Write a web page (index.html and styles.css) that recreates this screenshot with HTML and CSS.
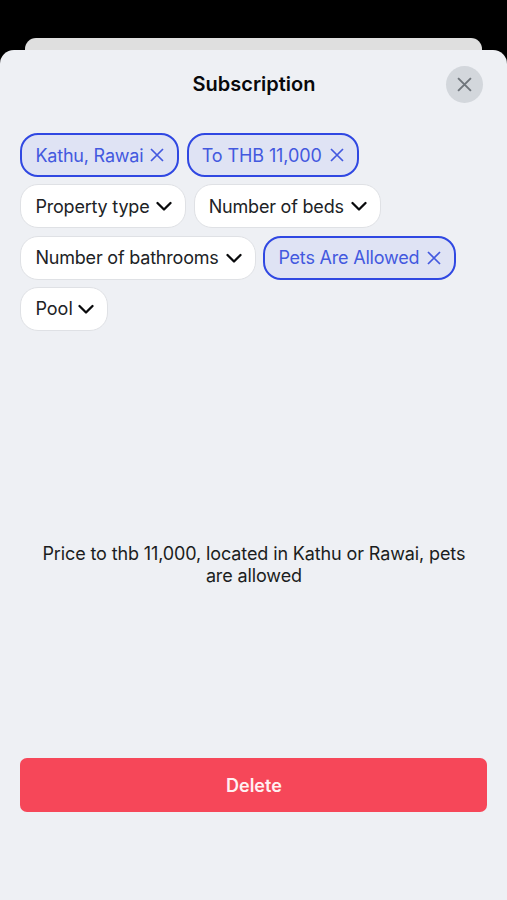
FILE: index.html
```html
<!DOCTYPE html>
<html lang="en">
<head>
<meta charset="utf-8">
<title>Subscription</title>
<link rel="stylesheet" href="styles.css">
</head>
<body>
<svg class="sprite" aria-hidden="true">
  <symbol id="cross" viewBox="0 0 14 14"><path d="M1 1 13 13M13 1 1 13"/></symbol>
  <symbol id="chevron" viewBox="0 0 16 10"><path d="M1.5 2 8 8.5 14.5 2"/></symbol>
</svg>
<div class="back-card"></div>
<main class="sheet">
  <header class="header">
    <h1>Subscription</h1>
    <button class="close" aria-label="Close"><svg class="close-icon"><use href="#cross"/></svg></button>
  </header>
  <div class="chips">
    <button class="chip active kathu"><span>Kathu, Rawai</span><svg class="cross"><use href="#cross"/></svg></button>
    <button class="chip active price"><span>To THB 11,000</span><svg class="cross"><use href="#cross"/></svg></button>
    <button class="chip type"><span>Property type</span><svg class="chevron"><use href="#chevron"/></svg></button>
    <button class="chip beds"><span>Number of beds</span><svg class="chevron"><use href="#chevron"/></svg></button>
    <button class="chip baths"><span>Number of bathrooms</span><svg class="chevron"><use href="#chevron"/></svg></button>
    <button class="chip active pets"><span>Pets Are Allowed</span><svg class="cross"><use href="#cross"/></svg></button>
    <button class="chip pool"><span>Pool</span><svg class="chevron"><use href="#chevron"/></svg></button>
  </div>
  <p class="summary">Price to thb 11,000, located in Kathu or Rawai, pets are allowed</p>
  <button class="delete">Delete</button>
</main>
</body>
</html>
```
FILE: styles.css
```css
* { box-sizing: border-box; }
body {
  margin: 0;
  height: 900px;
  padding-top: 38px;
  display: flex;
  flex-direction: column;
  overflow: hidden;
  background: #000;
  color: #1b1d20;
  font-family: Inter, "Liberation Sans", sans-serif;
}
button { font: inherit; margin: 0; border: 0; padding: 0; }
svg { fill: none; stroke: currentColor; flex: none; }
.sprite { position: absolute; width: 0; height: 0; }
.back-card {
  flex: none;
  height: 12px;
  margin: 0 25px;
  border-radius: 11px 11px 0 0;
  background: #dfdfdf;
}
.sheet {
  flex: 1;
  display: flex;
  flex-direction: column;
  padding: 16px 19.6px 88px 20.4px;
  border-radius: 14px 14px 0 0;
  background: #eef0f4;
}
.header {
  display: grid;
  grid-template-columns: 37px 1fr 37px;
  align-items: center;
  padding: 0 4.8px 0 5px;
  height: 37px;
}
h1 {
  grid-column: 2;
  margin: 0 0 2px;
  text-align: center;
  font-size: 20px;
  line-height: 24px;
  font-weight: 600;
  letter-spacing: 0;
  color: #08090b;
}
.close {
  width: 37px;
  height: 37px;
  border-radius: 50%;
  display: grid;
  place-items: center;
  background: #d3d7dc;
  color: #6f757b;
}
.close-icon { width: 15px; height: 15px; stroke-width: 1.8; }
.chips {
  display: flex;
  flex-wrap: wrap;
  gap: 7.3px;
  margin-top: 30px;
}
.chip {
  height: 44px;
  display: flex;
  align-items: center;
  justify-content: space-between;
  padding: 0 13px 0 14px;
  border: 1px solid #dfe1e5;
  border-radius: 18px;
  background: #fff;
  color: #202225;
  font-size: 18px;
  line-height: 22px;
  letter-spacing: -0.2px;
  white-space: nowrap;
}
.chip span { padding-top: 1px; }
.active {
  padding: 0 13px;
  border: 2px solid #3048e2;
  background: #dfe3f4;
  color: #4359df;
}
.kathu { width: 159px; }
.price { width: 172px; letter-spacing: -0.1px; }
.type { width: 166px; }
.beds { width: 187px; }
.baths { width: 235.7px; }
.pets { width: 192.4px; }
.pool { width: 88px; letter-spacing: 0; }
.cross { width: 14px; height: 14px; stroke-width: 1.7; }
.chevron { width: 16px; height: 10px; stroke-width: 2.3; color: #090a0c; stroke-linecap: round; stroke-linejoin: round; }
.summary {
  margin: 212px 10px auto;
  text-align: center;
  font-size: 18px;
  line-height: 22px;
  letter-spacing: -0.12px;
}
.delete {
  flex: none;
  height: 54px;
  border-radius: 7px;
  background: #f64759;
  color: #fff0f2;
  font-size: 18px;
  line-height: 22px;
  padding-top: 1px;
  font-weight: 600;
}
```
